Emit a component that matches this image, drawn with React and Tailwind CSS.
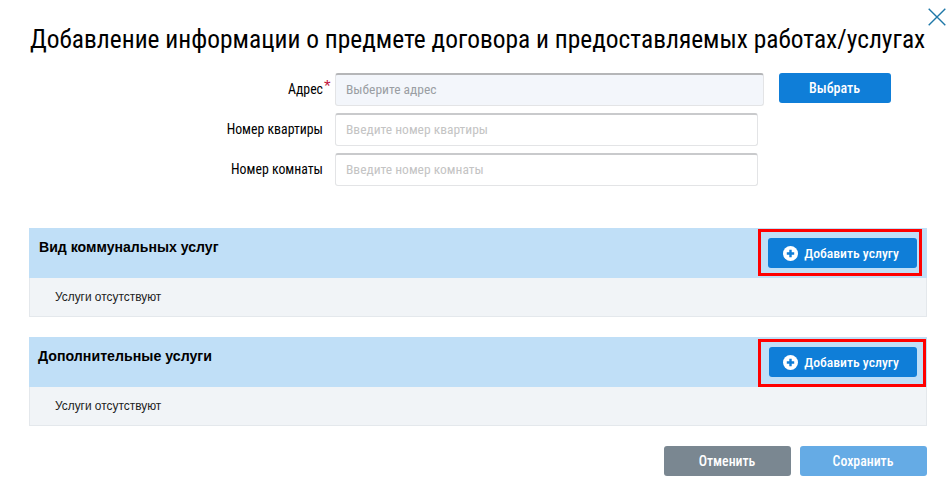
const cond = "font-['Roboto',sans-serif] [font-stretch:75%]";

function PlusIcon() {
  return (
    <svg width="15" height="15" viewBox="0 0 15 15" className="shrink-0">
      <circle cx="7.5" cy="7.5" r="7.5" fill="#fff" />
      <path d="M7.5 3.8v7.4M3.8 7.5h7.4" stroke="#0f7ed8" strokeWidth="2.4" />
    </svg>
  );
}

function Field({ label, placeholder, star, disabled }) {
  return (
    <div className="flex items-start">
      <div className={`w-[294px] h-[33px] flex items-center justify-end text-[13.8px] text-black ${cond}`}>
        <span className="relative">
          {label}
          {star && <span className="absolute left-full top-[-1px] ml-[1px] text-[#c0143c] text-[17px] leading-[17px] font-['Liberation_Sans',sans-serif]">*</span>}
        </span>
      </div>
      <div
        className={`h-[33px] ml-[12px] rounded-[3px] border border-[#e3e4e6] border-t-2 px-[10px] pb-[2px] flex items-center text-[13.5px] ${cond} ${
          disabled ? "w-[429px] bg-[#f3f6fb] border-[#c6c7c9] border-t-[#b5b6b8] text-[#9a9ea3]" : "w-[423px] bg-white border-t-[#c9cacc] text-[#c4c4c4]"
        }`}
      >
        {placeholder}
      </div>
    </div>
  );
}

function Section({ title, btnW, frameW, frameH, frameMt, pl, frameMr, btnMt, titleSize, btnPr }) {
  return (
    <section className="w-[898px] ml-[29px]">
      <div className="h-[50px] bg-[#c0dff7] flex items-start justify-between" style={{ paddingLeft: pl }}>
        <h3 className="mt-[11px] leading-[17px] font-bold text-black font-['Liberation_Sans',sans-serif]" style={{ fontSize: titleSize }}>{title}</h3>
        <div className="box-border border-[3px] border-[#ff0000] flex justify-end" style={{ width: frameW, height: frameH, marginTop: frameMt, marginRight: frameMr }}>
          <button className={`h-[30px] rounded-[3px] bg-[#0f7ed8] text-white flex items-center justify-center gap-[6px] text-[13.7px] font-medium ${cond}`} style={{ width: btnW, marginTop: btnMt, marginRight: frameMr === 1 ? 6 : 2, paddingRight: btnPr }}>
            <PlusIcon />
            Добавить услугу
          </button>
        </div>
      </div>
      <div className="h-[39px] bg-[#f1f4f7] border border-t-0 border-[#e4e8ec] pl-[25px] pt-[2px] flex items-center text-[11.9px] text-[#222] font-['Liberation_Sans',sans-serif]">
        Услуги отсутствуют
      </div>
    </section>
  );
}

export default function App() {
  return (
    <div className="w-[950px] h-[490px] bg-white relative overflow-hidden">
      <button className="absolute right-[4px] top-[8px] text-[#1f78a8]">
        <svg width="18" height="18" viewBox="0 0 18 18" fill="none" stroke="currentColor" strokeWidth="1.4">
          <path d="M0.7 0.7 17.3 17.3M17.3 0.7 0.7 17.3" />
        </svg>
      </button>
      <h1 className={`pt-[22px] pl-[30px] h-[73px] text-[25.43px] leading-[34px] text-black whitespace-nowrap ${cond}`}>
        Добавление информации о предмете договора и предоставляемых работах/услугах
      </h1>
      <div className="flex flex-col gap-[7px] ml-[29px] relative">
        <div className="flex items-start">
          <Field label="Адрес" placeholder="Выберите адрес" star disabled />
          <button className={`ml-[15px] w-[112px] h-[30px] rounded-[3px] bg-[#0f7ed8] text-white text-[14px] font-medium pr-[1px] ${cond}`}>Выбрать</button>
        </div>
        <Field label="Номер квартиры" placeholder="Введите номер квартиры" />
        <Field label="Номер комнаты" placeholder="Введите номер комнаты" />
      </div>
      <div className="mt-[42px] flex flex-col gap-[20px]">
        <Section title="Вид коммунальных услуг" pl={10} btnW={149} frameW={164} frameH={47} frameMt={1} frameMr={5} btnMt={6} titleSize={14.1} btnPr={3} />
        <Section title="Дополнительные услуги" pl={9} btnW={148} frameW={168} frameH={48} frameMt={2} frameMr={1} btnMt={5} titleSize={14.2} btnPr={4} />
      </div>
      <div className="mt-[20px] mr-[23px] flex justify-end gap-[9px]">
        <button className={`w-[127px] h-[30px] rounded-[3px] bg-[#7a8791] text-white text-[13.8px] font-medium pr-[1px] ${cond}`}>Отменить</button>
        <button className={`w-[127px] h-[30px] rounded-[3px] bg-[#65abe5] text-white text-[13.8px] font-medium pr-[1px] ${cond}`}>Сохранить</button>
      </div>
    </div>
  );
}
